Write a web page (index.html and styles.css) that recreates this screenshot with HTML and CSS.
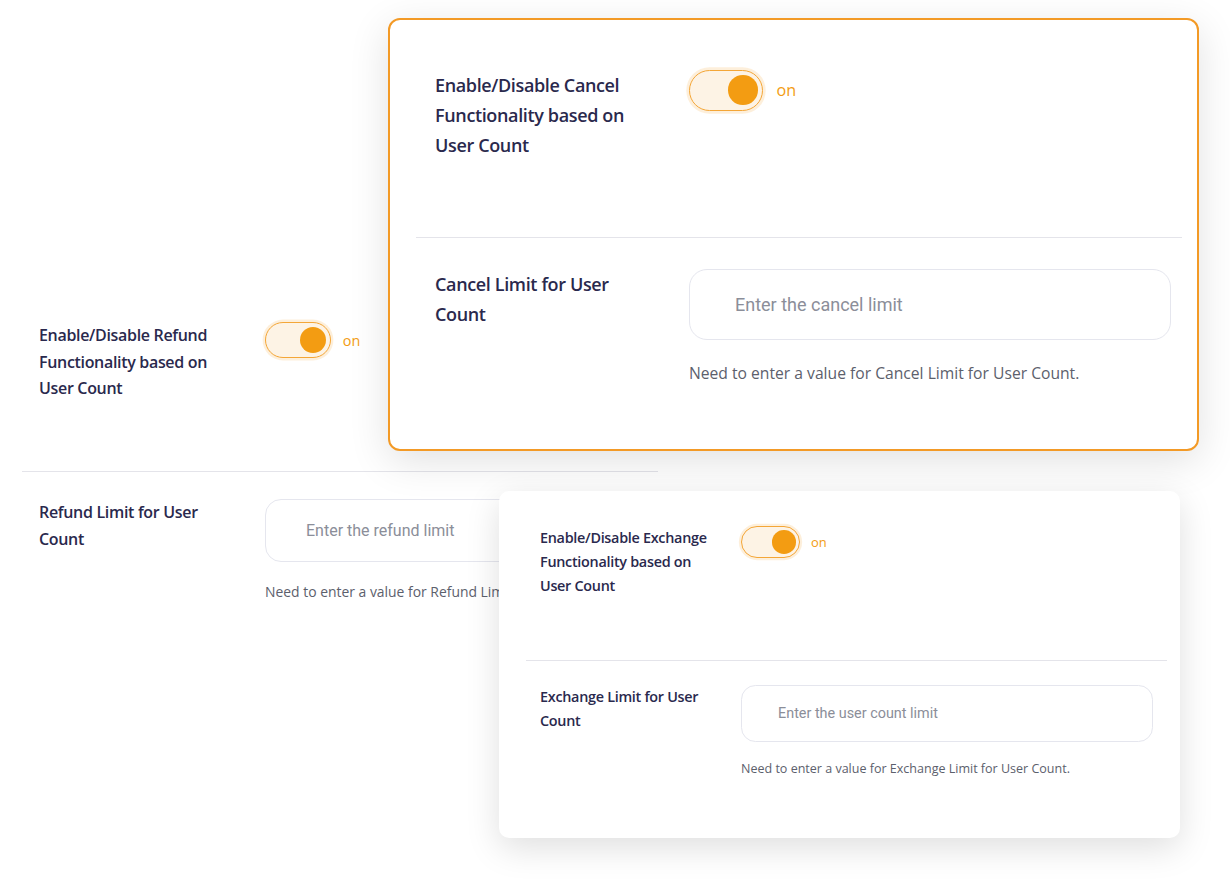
FILE: index.html
```html
<!DOCTYPE html>
<html lang="en">
<head>
  <meta charset="UTF-8">
  <title>User Count Limits</title>
  <link rel="stylesheet" href="styles.css">
</head>
<body>
  <div class="canvas">

    <!-- Refund settings (background) -->
    <section class="form form-refund">
      <div class="row row-toggle">
        <div class="label">Enable/Disable Refund<br>Functionality based on<br>User Count</div>
        <div class="switch-wrap">
          <span class="switch"><span class="knob"></span></span>
          <span class="on">on</span>
        </div>
      </div>
      <div class="divider"></div>
      <div class="row row-input">
        <div class="label">Refund Limit for User<br>Count</div>
        <div class="field">
          <div class="input">Enter the refund limit</div>
          <p class="help">Need to enter a value for Refund Limit for User Count.</p>
        </div>
      </div>
    </section>

    <!-- Cancel settings -->
    <section class="form card card-cancel">
      <div class="row row-toggle">
        <div class="label">Enable/Disable Cancel<br>Functionality based on<br>User Count</div>
        <div class="switch-wrap">
          <span class="switch"><span class="knob"></span></span>
          <span class="on">on</span>
        </div>
      </div>
      <div class="divider"></div>
      <div class="row row-input">
        <div class="label">Cancel Limit for User<br>Count</div>
        <div class="field">
          <div class="input">Enter the cancel limit</div>
          <p class="help">Need to enter a value for Cancel Limit for User Count.</p>
        </div>
      </div>
    </section>

    <!-- Exchange settings -->
    <section class="form card card-exchange">
      <div class="row row-toggle">
        <div class="label">Enable/Disable Exchange<br>Functionality based on<br>User Count</div>
        <div class="switch-wrap">
          <span class="switch"><span class="knob"></span></span>
          <span class="on">on</span>
        </div>
      </div>
      <div class="divider"></div>
      <div class="row row-input">
        <div class="label">Exchange Limit for User<br>Count</div>
        <div class="field">
          <div class="input">Enter the user count limit</div>
          <p class="help">Need to enter a value for Exchange Limit for User Count.</p>
        </div>
      </div>
    </section>

  </div>
</body>
</html>
```

FILE: styles.css
```css
body { margin: 0; background: #fff; font-family: "Open Sans", "Noto Sans", sans-serif; color: #2a294d; }
.canvas { position: relative; width: 1230px; height: 881px; overflow: hidden; }

/* the three forms sit on a free canvas, overlapping like screenshots */
.form { position: absolute; box-sizing: border-box; }
.form-refund { left: 22px; top: 322px; width: 636px; font-size: 16px; z-index: 1; }
.form-refund .row { padding-left: 17px; }
.form-refund .label { width: 226px; }
.form-refund .input { width: 428px; }

.card { background: #fff; }
.card-cancel {
  left: 388px; top: 18px; width: 811px;
  font-size: 18px;
  padding: 50px 15px 64px 26px;
  border: 2px solid #f39a26;
  border-radius: 12px;
  box-shadow: 0 10px 40px rgba(0, 0, 0, 0.12);
  z-index: 2;
}
.card-cancel .row { padding-left: 19px; }
.card-cancel .label { width: 254px; }
.card-cancel .input { width: 482px; }

.card-exchange {
  left: 499px; top: 491px; width: 681px;
  font-size: 14.4px;
  padding: 35px 13px 60px 27px;
  border-radius: 10px;
  box-shadow: 0 10px 34px rgba(0, 0, 0, 0.13);
  z-index: 3;
}
.card-exchange .row { padding-left: 14px; }
.card-exchange .label { width: 201px; }
.card-exchange .input { width: 412px; }

.row { display: flex; align-items: flex-start; }
.row-toggle { padding-bottom: 4.3em; }
.row-input { margin-top: 1.7em; }
.label {
  flex: none;
  font-weight: 600;
  letter-spacing: -0.02em;
  line-height: 1.667em;
  white-space: nowrap;
}
.divider { height: 1px; background: #e4e4ea; }

.switch-wrap { display: flex; align-items: center; }
.switch {
  position: relative;
  box-sizing: border-box;
  width: 4.1em; height: 2.25em;
  border: 0.11em solid #f4a637;
  border-radius: 2em;
  background: #fdf3e5;
  box-shadow: 0 0 0 0.15em rgba(244, 166, 55, 0.18);
}
.knob {
  position: absolute; top: 50%; right: 0.22em;
  width: 1.65em; height: 1.65em;
  margin-top: -0.825em;
  border-radius: 50%;
  background: #f39c12;
}
.on { margin-left: 0.85em; font-size: 0.9em; font-weight: 500; color: #f39c12; }

.field { flex: none; }
.input {
  box-sizing: border-box;
  height: 3.94em;
  padding-left: 2.5em;
  display: flex; align-items: center;
  border: 1px solid #e5e6ee;
  border-radius: 1em;
  background: #fff;
  font-family: "Roboto", sans-serif;
  font-size: 1em;
  color: #8b8e99;
}
.help {
  margin: 1.45em 0 0;
  font-size: 0.87em;
  line-height: 1.4;
  color: #5c606c;
}
```
